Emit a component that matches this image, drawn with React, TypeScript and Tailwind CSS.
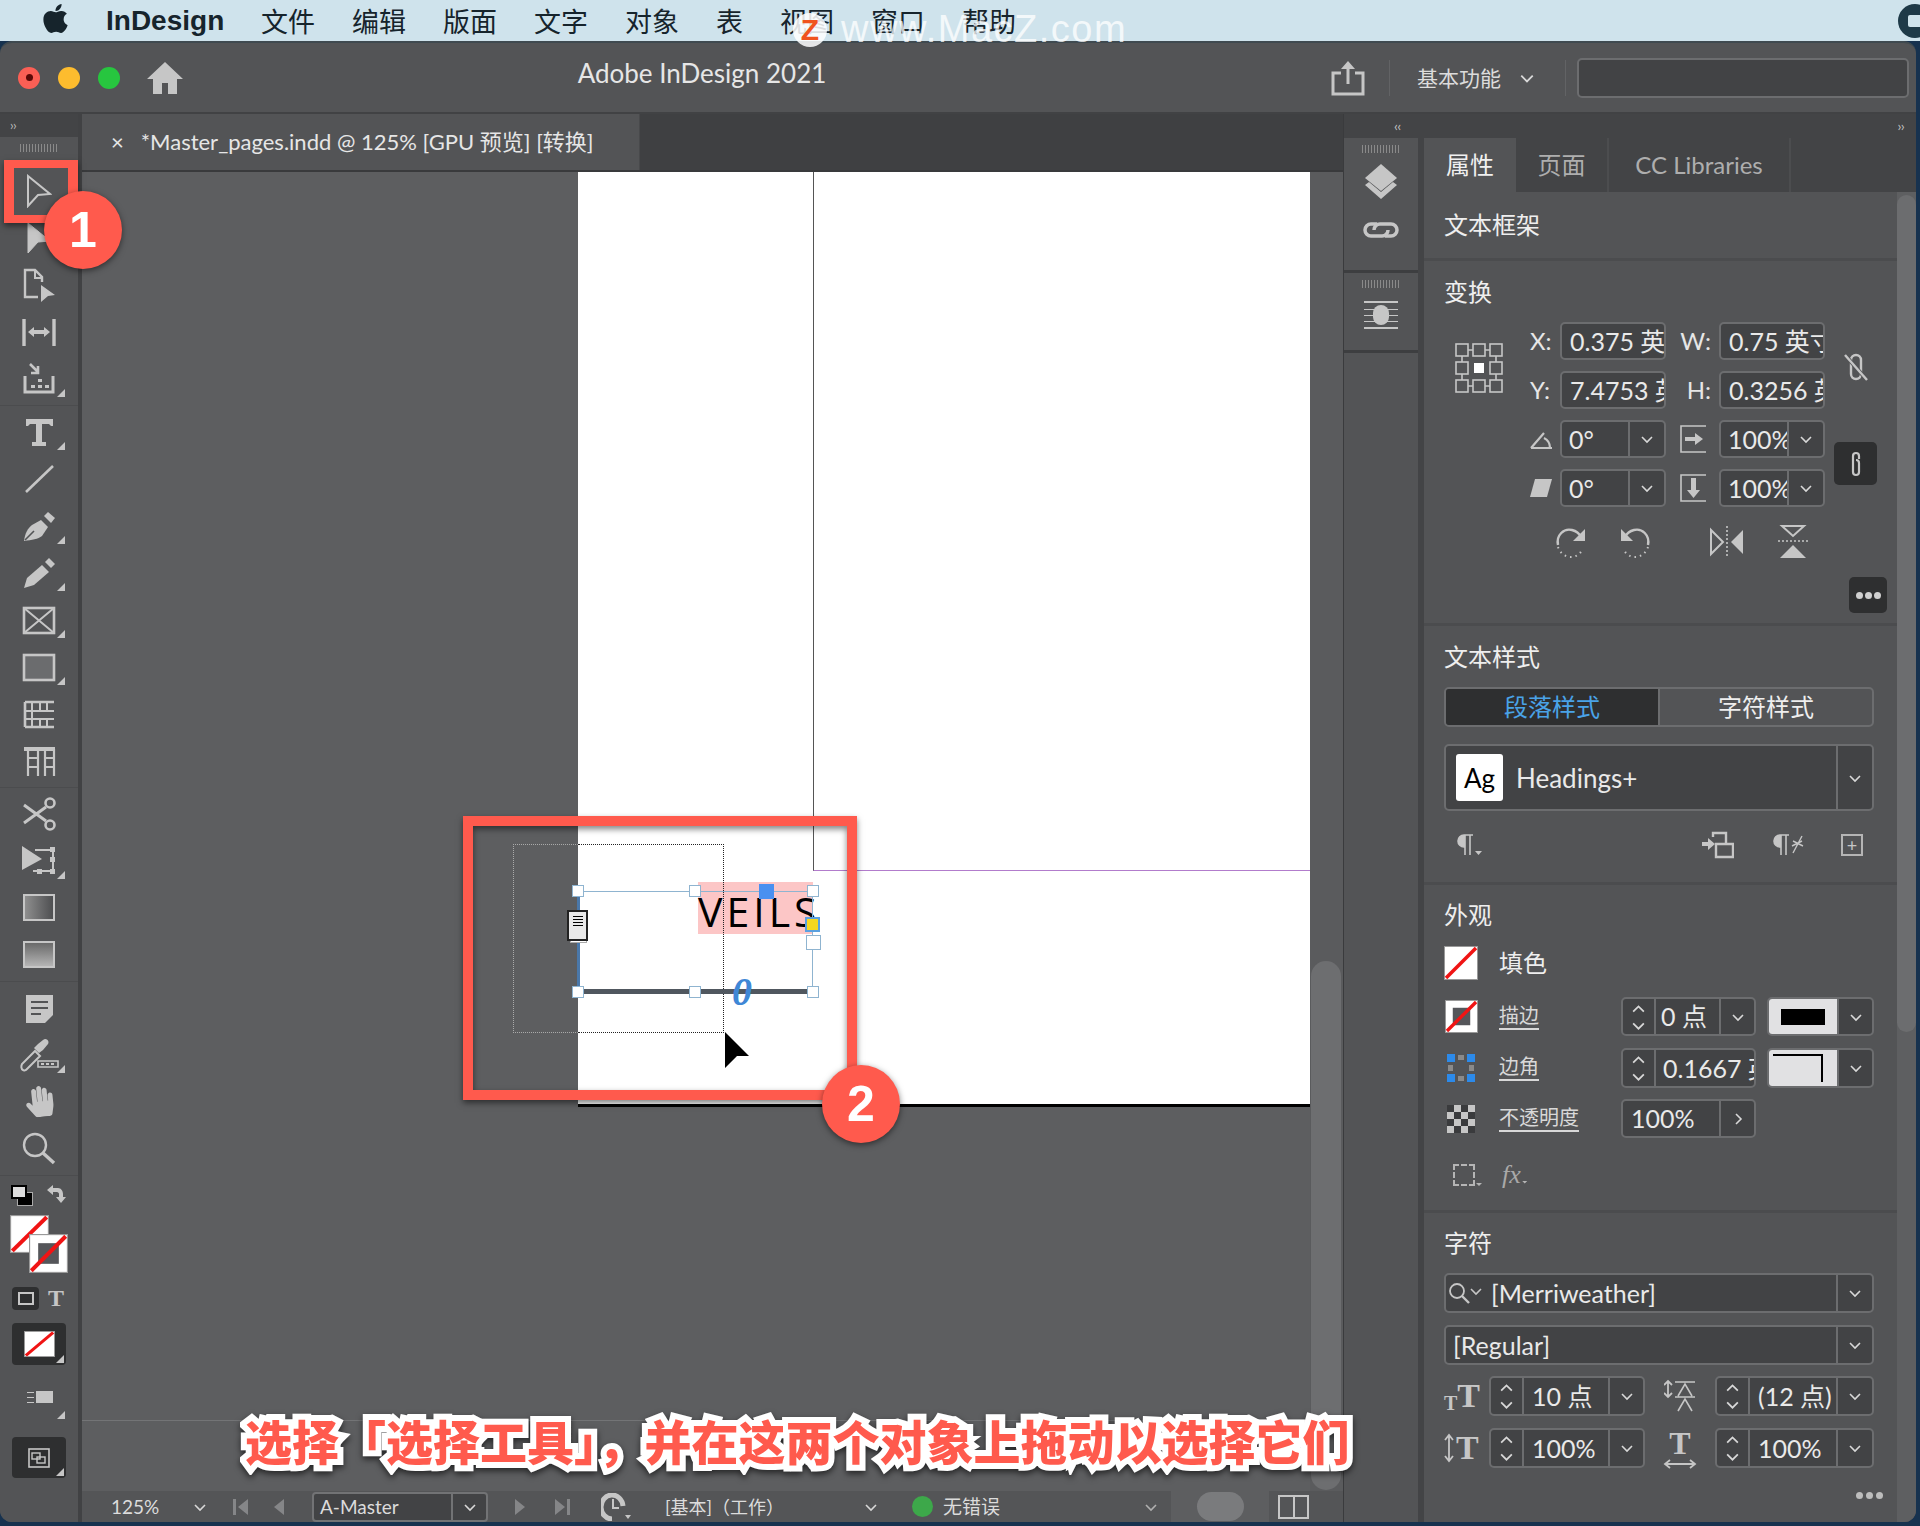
import { ReactNode } from "react";
import { FaApple, FaHandPaper } from "react-icons/fa";

const G = "#c6c6c6";

function Ic({ w = 36, h = 36, vw, vh, className = "", children }: { w?: number; h?: number; vw?: number; vh?: number; className?: string; children: ReactNode }) {
  return (
    <svg width={w} height={h} viewBox={`0 0 ${vw ?? w} ${vh ?? h}`} fill="none" stroke={G} className={`shrink-0 ${className}`}>
      {children}
    </svg>
  );
}

function Chev({ dir = "down", size = 14, color = "#d8d8d8" }: { dir?: "down" | "up" | "right"; size?: number; color?: string }) {
  const d = dir === "down" ? "M2 5l5 5 5-5" : dir === "up" ? "M2 10l5-5 5 5" : "M5 2l5 5-5 5";
  return (
    <svg width={size} height={size} viewBox="0 0 14 14" fill="none" stroke={color} strokeWidth="1.6" className="shrink-0">
      <path d={d} />
    </svg>
  );
}

function Tri() {
  return <div className="absolute left-[57px] bottom-[5px] w-2 h-2 bg-[#c6c6c6] [clip-path:polygon(100%_0,100%_100%,0_100%)]" />;
}

function Tool({ tri, children }: { tri?: boolean; children: ReactNode }) {
  return (
    <div className="relative h-[47px] w-full flex items-center justify-center">
      {children}
      {tri && <Tri />}
    </div>
  );
}

const Sep = () => (
  <div className="h-[6px] flex items-center">
    <div className="h-px w-full bg-[#4b4c4e]" />
  </div>
);

function NoneBox({ w, h, inner }: { w: number; h: number; inner?: boolean }) {
  return (
    <svg width={w} height={h} viewBox="0 0 34 34" preserveAspectRatio="none" className="shrink-0">
      <rect x="0.5" y="0.5" width="33" height="33" fill="#fff" stroke="#999" />
      {inner && <rect x="8" y="8" width="18" height="18" fill="#55565a" />}
      <path d="M2 32L32 2" stroke="#f01414" strokeWidth="3.5" />
    </svg>
  );
}

function LeftTools() {
  return (
    <div className="w-[82px] shrink-0 flex flex-col bg-[#535456] border-r-4 border-[#414244]">
      <div className="h-[23px] bg-[#434446] flex items-center pl-[10px] text-[13px] leading-none text-[#b9b9b9] tracking-tighter">››</div>
      <div className="h-[22px] flex items-center justify-center">
        <div className="w-[38px] h-[8px] bg-[repeating-linear-gradient(90deg,#8a8a8a_0,#8a8a8a_1px,transparent_1px,transparent_3px)]" />
      </div>
      <div className="h-2" />
      <Tool>
        <Ic w={26} h={34}><path d="M2 2l22 18-12 1-10 11z" strokeWidth="2" /></Ic>
      </Tool>
      <Tool>
        <Ic w={26} h={34}><path d="M2 2l22 18-12 1-10 11z" fill={G} strokeWidth="1" /></Ic>
      </Tool>
      <Tool>
        <Ic>
          <path d="M21 15V10l-7-7H4v27h13" strokeWidth="2.4" />
          <path d="M14 3v8h7" strokeWidth="2" />
          <path d="M20 18l14 10-7 1-7 6z" fill={G} stroke="none" />
        </Ic>
      </Tool>
      <Tool>
        <Ic>
          <path d="M3 5v27M33 5v27" strokeWidth="3.4" />
          <path d="M7 18l6-5v3h10v-3l6 5-6 5v-3H13v3z" fill={G} stroke="none" />
        </Ic>
      </Tool>
      <Tool tri>
        <Ic>
          <path d="M4 15v16h28V15" strokeWidth="3" />
          <path d="M9 3l8 8m0-6v7h-7" strokeWidth="2.6" />
          <path d="M10 24h4v3h-4zM17 24h4v3h-4zM24 24h4v3h-4zM17 18h4v3h-4z" fill={G} stroke="none" />
        </Ic>
      </Tool>
      <Sep />
      <Tool tri>
        <Ic><path d="M5 5h27v7h-2l-2-2h-7v18h4v4H11v-4h4V10H9l-2 2H5z" fill={G} stroke="none" /></Ic>
      </Tool>
      <Tool>
        <Ic><path d="M5 31L32 5" strokeWidth="2.6" /></Ic>
      </Tool>
      <Tool tri>
        <Ic>
          <path d="M3 33c1-8 4-13 8-16l9-5 7 7-6 9c-4 3-10 4-18 5z" fill={G} stroke="none" />
          <path d="M4 32l9-9" stroke="#535456" strokeWidth="1.6" />
          <path d="M23 8l4-4 7 6-4 5z" fill={G} stroke="none" />
        </Ic>
      </Tool>
      <Tool tri>
        <Ic>
          <path d="M3 33l3-10 15-13 7 7-15 13z" fill={G} stroke="none" />
          <path d="M24 7l4-4 6 6-4 4z" fill={G} stroke="none" />
        </Ic>
      </Tool>
      <Tool tri>
        <Ic>
          <rect x="3" y="6" width="30" height="25" strokeWidth="2.6" />
          <path d="M3 6l30 25M33 6L3 31" strokeWidth="2" />
        </Ic>
      </Tool>
      <Tool tri>
        <Ic><rect x="3" y="6" width="30" height="25" fill="#6b6c6e" strokeWidth="2.6" /></Ic>
      </Tool>
      <Tool>
        <Ic>
          <path d="M4 6h29M4 31h29M4 6v25" strokeWidth="2.6" />
          <path d="M4 15h29M4 23h29M11 6v25" strokeWidth="2" />
          <path d="M19 6v9M26 6v9M19 23v8M26 23v8" strokeWidth="2" />
        </Ic>
      </Tool>
      <Tool>
        <Ic>
          <path d="M3 6h31" strokeWidth="4" />
          <path d="M7 6v27M17 6v27M24 6v27M33 6v27" strokeWidth="2.2" />
          <path d="M7 15h10M7 24h10M24 15h9M24 24h9" strokeWidth="2" />
        </Ic>
      </Tool>
      <Sep />
      <Tool>
        <Ic>
          <circle cx="29" cy="7" r="4.5" strokeWidth="2.6" />
          <circle cx="29" cy="29" r="4.5" strokeWidth="2.6" />
          <path d="M3 9l22 16M3 27L25 11" strokeWidth="3" />
        </Ic>
      </Tool>
      <Tool tri>
        <Ic>
          <path d="M1 3l20 13-20 11z" fill={G} stroke="none" />
          <path d="M14 7h18v21H12" strokeWidth="2" strokeDasharray="0" />
          <path d="M29 4h5v5h-5zM29 14h5v5h-5zM29 26h5v5h-5zM16 26h5v5h-5z" fill={G} stroke="none" />
        </Ic>
      </Tool>
      <Tool>
        <div className="w-8 h-[27px] border-2 border-[#c6c6c6] bg-gradient-to-r from-[#8f8f8f] to-[#4e4f51]" />
      </Tool>
      <Tool>
        <div className="w-8 h-[27px] border-2 border-[#c6c6c6] bg-gradient-to-b from-[#6a6a6a] to-[#b5b5b5]" />
      </Tool>
      <Sep />
      <Tool>
        <Ic>
          <path d="M5 5h27v20l-8 8H5z" fill={G} stroke="none" />
          <path d="M10 12h17M10 18h17M10 24h10" stroke="#535456" strokeWidth="2" />
        </Ic>
      </Tool>
      <Tool tri>
        <Ic w={40} h={36}>
          <path d="M4 33c-2-1-2-4-1-6l13-13 5 5-13 13c-1 1-3 2-4 1z" strokeWidth="2" />
          <path d="M15 11l5 5 4-3 5-6c2-3-2-7-5-4l-5 4z" fill={G} stroke="none" />
          <path d="M19 24h20v6H19z" strokeWidth="1.6" />
          <path d="M22 26h3v2h-3zM27 26h3v2h-3zM32 26h3v2h-3z" fill={G} stroke="none" />
        </Ic>
      </Tool>
      <Tool>
        <FaHandPaper size={31} color={G} className="-rotate-6" />
      </Tool>
      <Tool>
        <Ic>
          <circle cx="14" cy="14" r="11" strokeWidth="2.4" />
          <path d="M22 22l11 10" strokeWidth="3.4" />
        </Ic>
      </Tool>
      <Sep />
      <div className="flex items-center h-[20px] mt-[7px] pl-[11px] relative">
        <div className="relative w-[24px] h-[20px]">
          <div className="absolute left-[6px] top-[7px] w-[16px] h-[14px] bg-black border border-[#aaa]" />
          <div className="absolute left-0 top-0 w-[16px] h-[14px] bg-[#ddd] border-2 border-black" />
        </div>
        <svg width="22" height="22" viewBox="0 0 22 22" fill={G} className="ml-[11px]">
          <path d="M1 6l6-5v3h5c3 0 5 3 5 6v3h3l-5 6-5-6h3v-3c0-1-1-2-2-2H7v3z" />
        </svg>
      </div>
      <div className="relative h-[57px] mt-[10px]">
        <div className="absolute left-[10px] top-0"><NoneBox w={39} h={38} /></div>
        <div className="absolute left-[29px] top-[19px]"><NoneBox w={39} h={39} inner /></div>
      </div>
      <div className="flex items-center h-[24px] mt-[14px] pl-[12px]">
        <div className="w-[27px] h-[23px] rounded-[4px] bg-[#2e2f30] flex items-center justify-center">
          <div className="w-[16px] h-[13px] border-2 border-[#c6c6c6]" />
        </div>
        <span className="ml-[9px] text-[24px] font-bold leading-none text-[#c6c6c6] [font-family:'Liberation_Serif',serif]">T</span>
      </div>
      <div className="relative h-[42px] mt-[13px] mx-[12px] rounded-[4px] bg-[#2e2f30] flex items-center justify-center">
        <NoneBox w={31} h={26} />
        <div className="absolute right-[2px] bottom-[2px] w-2 h-2 bg-[#c6c6c6] [clip-path:polygon(100%_0,100%_100%,0_100%)]" />
      </div>
      <div className="relative h-[36px] mt-[18px]">
        <div className="absolute left-[36px] top-[8px] w-[17px] h-[12px] bg-[#c6c6c6]" />
        <div className="absolute left-[27px] top-[9px] w-[7px] h-px bg-[#c6c6c6]" />
        <div className="absolute left-[27px] top-[14px] w-[7px] h-px bg-[#c6c6c6]" />
        <div className="absolute left-[27px] top-[19px] w-[7px] h-px bg-[#c6c6c6]" />
        <div className="absolute left-[57px] bottom-0 w-2 h-2 bg-[#c6c6c6] [clip-path:polygon(100%_0,100%_100%,0_100%)]" />
      </div>
      <div className="relative h-[41px] mt-[18px] mx-[12px] rounded-[4px] bg-[#2e2f30] flex items-center justify-center">
        <Ic w={22} h={20}>
          <rect x="1" y="1" width="20" height="18" strokeWidth="1.6" />
          <rect x="4" y="5" width="8" height="6" strokeWidth="1.4" />
          <rect x="9" y="9" width="8" height="6" strokeWidth="1.4" />
        </Ic>
        <div className="absolute right-[2px] bottom-[2px] w-2 h-2 bg-[#c6c6c6] [clip-path:polygon(100%_0,100%_100%,0_100%)]" />
      </div>
    </div>
  );
}

function Canvas() {
  const handles: [number, number, number][] = [
    [496, 719, 12],
    [613, 719, 12],
    [731, 719, 12],
    [731, 770, 15],
    [496, 820, 12],
    [613, 820, 12],
    [731, 820, 12],
  ];
  return (
    <div className="relative flex-1 overflow-hidden bg-[#5d5e60]">
      <div className="absolute left-0 right-0 top-[1248px] h-px bg-[#737476]" />
      <div className="absolute left-[496px] top-0 w-[732px] h-[935px] bg-white border-b-[3px] border-black">
        <div className="absolute left-[235px] top-0 w-[497px] h-[699px] border-l border-b border-l-[#555] border-b-[#b27ccc]" />
        <div className="absolute left-[120px] top-[710px] w-[115px] h-[52px] bg-[#fcc6c6]" />
        <div className="absolute left-[120px] top-[717px] text-[41px] leading-[44px] tracking-[4px] text-black [font-family:'Open_Sans',sans-serif]">VEILS</div>
      </div>
      <div className="absolute left-[431px] top-[672px] w-[211px] h-[189px] border border-dotted border-[#aaa]" />
      <div className="absolute left-[496px] top-[672px] w-[146px] h-[189px] border-t border-r border-b border-dotted border-t-[#222] border-r-[#222] border-b-[#222]" />
      <div className="absolute left-[496px] top-[719px] w-[235px] h-[101px] border border-[#8fb4d0]" />
      <div className="absolute left-[495px] top-[719px] w-[3px] h-[101px] bg-[#4a78aa]" />
      <div className="absolute left-[496px] top-[817px] w-[235px] h-[5px] bg-[#50575f]" />
      {handles.map(([x, y, s]) => (
        <div key={`${x}-${y}`} className="absolute bg-white border border-[#8fb4d0]" style={{ left: x - s / 2, top: y - s / 2, width: s, height: s }} />
      ))}
      <div className="absolute left-[488px] top-[762px] w-[17px] h-[9px] bg-white border border-[#aaa]" />
      <div className="absolute left-[485px] top-[738px] w-[21px] h-[31px] bg-[#e9e9e9] border-2 border-[#222] flex flex-col gap-[2px] items-center pt-[4px]">
        <div className="w-[10px] h-[1px] bg-black" />
        <div className="w-[10px] h-[1px] bg-black" />
        <div className="w-[10px] h-[1px] bg-black" />
        <div className="w-[10px] h-[1px] bg-black" />
      </div>
      <div className="absolute left-[677px] top-[712px] w-[15px] h-[15px] bg-[#4a90f0]" />
      <div className="absolute left-[723px] top-[745px] w-[15px] h-[15px] bg-[#f5d821] border-2 border-[#5aa0e0]" />
      <div className="absolute left-[650px] top-[800px] text-[40px] leading-[40px] italic font-bold text-[#3f87d6] [font-family:'Liberation_Serif',serif]">0</div>
      <svg width="26" height="36" viewBox="0 0 26 36" className="absolute left-[642px] top-[860px]">
        <path d="M1 0l24 24-12 0-12 12z" fill="#000" />
      </svg>
    </div>
  );
}

function StatusBar() {
  return (
    <div className="h-[31px] shrink-0 bg-[#545557] flex items-center text-[19px] text-[#dcdcdc] leading-none">
      <span className="ml-[29px] w-[49px]">125%</span>
      <div className="ml-[33px]"><Chev /></div>
      <svg width="18" height="20" viewBox="0 0 18 20" fill="#858688" className="ml-[25px]"><path d="M1 2h3v16H1zM16 2v16L6 10z" /></svg>
      <svg width="10" height="20" viewBox="0 0 10 20" fill="#858688" className="ml-[24px]"><path d="M10 2v16L0 10z" /></svg>
      <div className="ml-[28px] w-[176px] h-[30px] rounded-[4px] border-2 border-[#727375] bg-[#424345] flex items-center">
        <span className="pl-[6px] flex-1">A-Master</span>
        <div className="w-[35px] h-full border-l-2 border-[#727375] flex items-center justify-center"><Chev /></div>
      </div>
      <svg width="10" height="20" viewBox="0 0 10 20" fill="#858688" className="ml-[27px]"><path d="M0 2v16l10-8z" /></svg>
      <svg width="18" height="20" viewBox="0 0 18 20" fill="#858688" className="ml-[28px]"><path d="M14 2h3v16h-3zM2 2v16l10-8z" /></svg>
      <svg width="30" height="28" viewBox="0 0 30 28" fill="none" className="ml-[30px]">
        <path d="M11 26A11 12 0 1 1 22 13" stroke="#c6c6c6" strokeWidth="5" />
        <path d="M12 6v9h6" stroke="#c6c6c6" strokeWidth="2" />
        <path d="M24 22h6l-3 4z" fill="#c6c6c6" />
      </svg>
      <span className="ml-[34px] w-[126px] whitespace-nowrap text-[18px]">[基本]（工作）</span>
      <div className="ml-[73px]"><Chev /></div>
      <div className="ml-[34px] w-[21px] h-[21px] rounded-full bg-[#3da84a]" />
      <span className="ml-[10px] w-[58px] whitespace-nowrap text-[19px]">无错误</span>
      <div className="ml-[143px]"><Chev color="#b0b0b0" /></div>
      <div className="ml-[13px] w-[98px] h-full bg-[#5d5e60] flex items-center justify-center">
        <div className="w-[47px] h-[29px] rounded-full bg-[#7a7b7d]" />
      </div>
      <div className="ml-[9px] w-[31px] h-[24px] border-2 border-[#c6c6c6] flex justify-center">
        <div className="w-[2px] h-full bg-[#c6c6c6]" />
      </div>
    </div>
  );
}

function Title({ children }: { children: ReactNode }) {
  return <div className="h-[30px] leading-[30px] text-[24px] text-[#eeeeee]">{children}</div>;
}

function Box({ w, h = 38, className = "", children }: { w?: number | string; h?: number; className?: string; children: ReactNode }) {
  return (
    <div className={`flex items-stretch shrink-0 overflow-hidden rounded-[5px] border-2 border-[#6c6d6f] bg-[#424345] text-[#e9e9e9] text-[25px] leading-none ${className}`} style={{ width: w, height: h }}>
      {children}
    </div>
  );
}

function Txt({ pl = 8, children }: { pl?: number; children: ReactNode }) {
  return <div className="flex-1 min-w-0 flex items-center whitespace-nowrap overflow-hidden" style={{ paddingLeft: pl }}>{children}</div>;
}

function ChevCell({ w = 35, dir = "down" }: { w?: number; dir?: "down" | "right" }) {
  return (
    <div className="shrink-0 border-l-2 border-[#6c6d6f] flex items-center justify-center" style={{ width: w }}>
      <Chev dir={dir} />
    </div>
  );
}

function Stepper() {
  return (
    <div className="w-[33px] shrink-0 border-r-2 border-[#6c6d6f] flex flex-col items-center justify-center gap-[2px]">
      <Chev dir="up" size={15} />
      <Chev size={15} />
    </div>
  );
}

function Combo({ value, w = 106 }: { value: string; w?: number }) {
  return (
    <Box w={w}>
      <Txt pl={7}>{value}</Txt>
      <ChevCell w={36} />
    </Box>
  );
}

function Label({ children }: { children: ReactNode }) {
  return <span className="text-[20px] text-[#d8d8d8] underline underline-offset-[5px] decoration-[1.5px] leading-none">{children}</span>;
}

function Transform() {
  const boxes = [2, 19, 36];
  return (
    <div className="pt-4 pb-[10px] pl-5 border-b-[3px] border-[#4b4c4e]">
      <Title>变换</Title>
      <div className="flex mt-[15px] relative">
        <div className="w-[86px] shrink-0 pl-[10px] pt-[20px]">
          <svg width="50" height="52" viewBox="0 0 50 52" fill="none" stroke={G} strokeWidth="1.6">
            {boxes.flatMap((x) =>
              [2, 20, 38].map((y) =>
                x === 19 && y === 20 ? (
                  <rect key={`${x}${y}`} x={x + 1} y={y + 1} width="10" height="10" fill="#fff" stroke="none" />
                ) : (
                  <rect key={`${x}${y}`} x={x} y={y} width="12" height="12" />
                ),
              ),
            )}
            <path d="M14 8h5M31 8h5M14 44h5M31 44h5M8 14v6M8 32v6M42 14v6M42 32v6" />
          </svg>
        </div>
        <div className="flex flex-col gap-[11px]">
          <div className="flex items-center">
            <span className="w-[30px] text-[24px] text-[#e6e6e6]">X:</span>
            <Box w={106}><Txt>0.375 英寸</Txt></Box>
            <span className="w-[53px] pr-2 text-right text-[24px] text-[#e6e6e6]">W:</span>
            <Box w={106}><Txt>0.75 英寸</Txt></Box>
          </div>
          <div className="flex items-center">
            <span className="w-[30px] text-[24px] text-[#e6e6e6]">Y:</span>
            <Box w={106}><Txt>7.4753 英寸</Txt></Box>
            <span className="w-[53px] pr-2 text-right text-[24px] text-[#e6e6e6]">H:</span>
            <Box w={106}><Txt>0.3256 英寸</Txt></Box>
          </div>
          <div className="flex items-center">
            <div className="w-[30px]">
              <Ic w={23} h={22}><path d="M1 20h21M1 20L14 5M14 10c4 2 6 6 6 10" strokeWidth="2.2" /></Ic>
            </div>
            <Combo value="0°" />
            <div className="w-[53px] flex justify-center">
              <Ic w={28} h={30}>
                <path d="M27 2H2v26h25" strokeWidth="1.6" strokeDasharray="0" />
                <path d="M6 13h10V9l8 6-8 6v-4H6z" fill={G} stroke="none" />
              </Ic>
            </div>
            <Combo value="100%" />
          </div>
          <div className="flex items-center">
            <div className="w-[30px]">
              <Ic w={23} h={20}><path d="M5 1h17l-5 18H0z" fill={G} stroke="none" /></Ic>
            </div>
            <Combo value="0°" />
            <div className="w-[53px] flex justify-center">
              <Ic w={28} h={30}>
                <path d="M27 2H2v26h25" strokeWidth="1.6" />
                <path d="M12 5h5v12h4l-6.500 8-6.500-8h4z" fill={G} stroke="none" />
              </Ic>
            </div>
            <Combo value="100%" />
          </div>
        </div>
        <div className="ml-[9px] flex flex-col items-center w-[43px]">
          <div className="mt-[30px]">
            <Ic w={26} h={30}>
              <rect x="8" y="3" width="10" height="24" rx="5" strokeWidth="2.4" />
              <path d="M2 3l22 25" stroke="#535456" strokeWidth="4" />
              <path d="M2 3l22 25" strokeWidth="2.4" />
            </Ic>
          </div>
          <div className="mt-[60px] w-[43px] h-[43px] rounded-[5px] bg-[#2e2f30] flex items-center justify-center">
            <Ic w={14} h={28}>
              <path d="M10 9V6a3 3 0 0 0-6 0v16a3 3 0 0 0 6 0v-9a3 3 0 0 0-3-3" strokeWidth="2.2" />
            </Ic>
          </div>
        </div>
      </div>
      <div className="flex h-[34px] mt-[18px] items-center">
        <div className="ml-[110px]">
          <Ic w={32} h={34}>
            <path d="M4 20C2 10 10 3 18 5c4 1 7 3 9 7" strokeWidth="2.4" />
            <path d="M31 4v12H19z" fill={G} stroke="none" />
            <path d="M4 22c2 6 7 10 13 10 5 0 9-3 11-7" strokeWidth="2" strokeDasharray="1.500 4" />
          </Ic>
        </div>
        <div className="ml-[34px] -scale-x-100">
          <Ic w={32} h={34}>
            <path d="M4 20C2 10 10 3 18 5c4 1 7 3 9 7" strokeWidth="2.4" />
            <path d="M31 4v12H19z" fill={G} stroke="none" />
            <path d="M4 22c2 6 7 10 13 10 5 0 9-3 11-7" strokeWidth="2" strokeDasharray="1.500 4" />
          </Ic>
        </div>
        <div className="ml-[58px]">
          <Ic w={34} h={34}>
            <path d="M1 5v24l12-12z" strokeWidth="2" />
            <path d="M33 5v24L21 17z" fill={G} stroke="none" />
            <path d="M17 1v32" strokeWidth="1.6" strokeDasharray="2 2" />
          </Ic>
        </div>
        <div className="ml-[34px]">
          <Ic w={30} h={36}>
            <path d="M4 2h22L15 12z" strokeWidth="2" />
            <path d="M2 34h26L15 21z" fill={G} stroke="none" />
            <path d="M0 17h30" strokeWidth="1.6" strokeDasharray="2 2" />
          </Ic>
        </div>
      </div>
      <div className="flex justify-end mt-[18px] pr-[10px]">
        <div className="w-[38px] h-[36px] rounded-[5px] bg-[#2e2f30] flex items-center justify-center gap-[2px]">
          <div className="w-[7px] h-[7px] rounded-full bg-[#cfcfcf]" />
          <div className="w-[7px] h-[7px] rounded-full bg-[#cfcfcf]" />
          <div className="w-[7px] h-[7px] rounded-full bg-[#cfcfcf]" />
        </div>
      </div>
    </div>
  );
}

function TextStyles() {
  return (
    <div className="pt-4 pb-[22px] pl-5 pr-[23px] border-b-[3px] border-[#4b4c4e]">
      <Title>文本样式</Title>
      <div className="mt-[15px] h-[40px] flex rounded-[5px] border-2 border-[#6c6d6f] overflow-hidden text-[24px] leading-none">
        <div className="w-[212px] bg-[#2e2f30] text-[#4aa3e8] flex items-center justify-center">段落样式</div>
        <div className="flex-1 border-l-2 border-[#6c6d6f] text-[#eeeeee] flex items-center justify-center">字符样式</div>
      </div>
      <Box h={67} className="mt-[17px] w-full">
        <div className="flex-1 flex items-center pl-[10px]">
          <div className="w-[47px] h-[47px] rounded-[3px] bg-white text-black text-[26px] flex items-center justify-center">Ag</div>
          <span className="ml-[13px] text-[26px]">Headings+</span>
        </div>
        <ChevCell w={36} />
      </Box>
      <div className="mt-[19px] h-[30px] flex items-center text-[#c6c6c6]">
        <div className="ml-[13px] flex items-end w-[30px]">
          <Ic w={18} h={24}><path d="M8 2H7a6 6 0 0 0 0 12h1zM8 2h8M8 2v20M13 2v20" fill={G} strokeWidth="1.600" /></Ic>
          <div className="w-[7px] h-[4px] bg-[#c6c6c6] [clip-path:polygon(0_0,100%_0,50%_100%)] mb-[2px]" />
        </div>
        <div className="ml-[215px]">
          <Ic w={32} h={28}>
            <path d="M11 6V2h13v11h7v13H14V13h10" strokeWidth="2.400" />
            <path d="M0 11h6V7l7 6-7 6v-4H0z" fill={G} stroke="none" />
          </Ic>
        </div>
        <div className="ml-[39px] flex">
          <Ic w={18} h={24}><path d="M8 2H7a6 6 0 0 0 0 12h1zM8 2h8M8 2v20M13 2v20" fill={G} strokeWidth="1.600" /></Ic>
          <Ic w={13} h={24}><path d="M11 3L2 20M2 8l10 5M1 13l10-5" strokeWidth="1.400" /></Ic>
        </div>
        <div className="ml-[37px] w-[22px] h-[22px] border-2 border-[#b5b5b5] flex items-center justify-center text-[18px] leading-none">+</div>
      </div>
    </div>
  );
}

function Appearance() {
  return (
    <div className="pt-[15px] pb-5 pl-5 pr-[23px] border-b-[3px] border-[#4b4c4e]">
      <Title>外观</Title>
      <div className="mt-4 h-[34px] flex items-center">
        <NoneBox w={34} h={34} />
        <span className="ml-[21px] text-[24px] text-[#eeeeee] leading-none">填色</span>
      </div>
      <div className="mt-[17px] h-[39px] flex items-center">
        <div className="w-[55px] pl-px"><NoneBox w={33} h={33} inner /></div>
        <div className="w-[122px]"><Label>描边</Label></div>
        <Box w={135} h={39}>
          <Stepper />
          <Txt pl={5}>0 点</Txt>
          <ChevCell />
        </Box>
        <Box w={107} h={39} className="ml-[11px]">
          <div className="flex-1 bg-[#e1e1e3] flex items-center justify-center">
            <div className="w-[44px] h-[16px] bg-black" />
          </div>
          <ChevCell w={35} />
        </Box>
      </div>
      <div className="mt-3 h-[40px] flex items-center">
        <div className="w-[55px] pl-[3px]">
          <svg width="28" height="28" viewBox="0 0 28 28">
            <path d="M0 0h8v8H0zM20 0h8v8h-8zM0 20h8v8H0zM20 20h8v8h-8z" fill="#2c8aea" />
            <path d="M11 1h6v5h-6zM11 22h6v5h-6zM1 11h5v6H1zM22 11h5v6h-5z" fill="#8a8a8a" />
          </svg>
        </div>
        <div className="w-[122px]"><Label>边角</Label></div>
        <Box w={135} h={40}>
          <Stepper />
          <Txt pl={7}>0.1667 英寸</Txt>
        </Box>
        <Box w={107} h={40} className="ml-[11px]">
          <div className="flex-1 bg-[#e1e1e3] relative">
            <div className="absolute left-[4px] top-[4px] right-[14px] bottom-[4px] border-t-2 border-r-2 border-black" />
          </div>
          <ChevCell w={35} />
        </Box>
      </div>
      <div className="mt-[11px] h-[39px] flex items-center">
        <div className="w-[55px] pl-[3px]">
          <div className="w-[28px] h-[28px] bg-[conic-gradient(#c6c6c6_25%,#3a3b3d_0_50%,#c6c6c6_0_75%,#3a3b3d_0)] bg-[length:14px_14px]" />
        </div>
        <div className="w-[122px]"><Label>不透明度</Label></div>
        <Box w={135} h={39}>
          <Txt pl={8}>100%</Txt>
          <ChevCell dir="right" />
        </Box>
      </div>
      <div className="mt-[22px] h-[30px] flex items-center">
        <div className="ml-[9px] flex items-end">
          <div className="w-[22px] h-[22px] border-2 border-dashed border-[#b5b5b5]" />
          <div className="ml-[1px] w-[6px] h-[3px] bg-[#b5b5b5] [clip-path:polygon(0_0,100%_0,50%_100%)]" />
        </div>
        <span className="ml-[20px] text-[26px] italic text-[#a9a9a9] leading-none [font-family:'Liberation_Serif',serif]">fx</span>
        <div className="mt-[14px] ml-[1px] w-[6px] h-[3px] bg-[#b5b5b5] [clip-path:polygon(0_0,100%_0,50%_100%)]" />
      </div>
    </div>
  );
}

const SerifT = ({ size, className = "" }: { size: number; className?: string }) => (
  <span className={`font-bold leading-none text-[#c6c6c6] [font-family:'Liberation_Serif',serif] ${className}`} style={{ fontSize: size }}>T</span>
);

function CharPanel() {
  return (
    <div className="pt-[15px] pl-5 pr-[23px]">
      <Title>字符</Title>
      <Box h={40} className="mt-[15px] w-full">
        <div className="flex-1 flex items-center">
          <svg width="36" height="26" viewBox="0 0 36 26" fill="none" stroke={G} className="ml-px">
            <circle cx="10" cy="11" r="7" strokeWidth="1.8" />
            <path d="M15 16l7 7" strokeWidth="2.400" />
            <path d="M24 9l5 5 5-5" strokeWidth="1.600" />
          </svg>
          <span className="ml-[8px]">[Merriweather]</span>
        </div>
        <ChevCell w={36} />
      </Box>
      <Box h={40} className="mt-3 w-full">
        <Txt pl={7}>[Regular]</Txt>
        <ChevCell w={36} />
      </Box>
      <div className="mt-[11px] flex items-center">
        <div className="w-[45px] flex items-end"><SerifT size={20} /><SerifT size={34} /></div>
        <Box w={156} h={40}>
          <Stepper />
          <Txt pl={8}>10 点</Txt>
          <ChevCell />
        </Box>
        <div className="w-[70px] flex justify-center">
          <Ic w={32} h={34}>
            <path d="M4 2v16M0 6l4-4 4 4M0 14l4 4 4-4" strokeWidth="1.800" />
            <path d="M11 3h20M14 17l7-12 7 12M14 32l7-12 7 12M11 18h20" strokeWidth="1.600" />
          </Ic>
        </div>
        <Box w={159} h={40}>
          <Stepper />
          <Txt pl={8}>(12 点)</Txt>
          <ChevCell w={36} />
        </Box>
      </div>
      <div className="mt-[11px] flex items-center">
        <div className="w-[45px] flex items-center">
          <Ic w={10} h={30}><path d="M5 2v26M1 7l4-5 4 5M1 23l4 5 4-5" strokeWidth="1.800" /></Ic>
          <SerifT size={34} className="ml-[2px]" />
        </div>
        <Box w={156} h={40}>
          <Stepper />
          <Txt pl={8}>100%</Txt>
          <ChevCell />
        </Box>
        <div className="w-[70px] flex flex-col items-center">
          <SerifT size={32} />
          <Ic w={34} h={10}><path d="M2 5h30M7 1L2 5l5 4M27 1l5 4-5 4" strokeWidth="1.800" /></Ic>
        </div>
        <Box w={159} h={40}>
          <Stepper />
          <Txt pl={8}>100%</Txt>
          <ChevCell w={36} />
        </Box>
      </div>
      <div className="mt-[23px] flex justify-end gap-[3px] pr-[-8px] translate-x-[9px]">
        <div className="w-[7px] h-[7px] rounded-full bg-[#bdbdbd]" />
        <div className="w-[7px] h-[7px] rounded-full bg-[#bdbdbd]" />
        <div className="w-[7px] h-[7px] rounded-full bg-[#bdbdbd]" />
      </div>
    </div>
  );
}

function RightPanels() {
  return (
    <div className="w-[573px] shrink-0 flex flex-col border-l border-[#3a3b3d] bg-[#434446]">
      <div className="h-[24px] shrink-0 bg-[#434446] relative flex items-center text-[14px] leading-none text-[#c0c0c0]">
        <span className="ml-[50px] tracking-tighter">‹‹</span>
        <span className="ml-auto mr-3 tracking-tighter">››</span>
      </div>
      <div className="flex flex-1 min-h-0">
        <div className="w-[74px] shrink-0 bg-[#535456] border-r-[6px] border-[#434446] box-content flex flex-col">
          <div className="h-[135px] border-b-[3px] border-[#3d3e40] flex flex-col items-center pt-[7px]">
            <div className="w-[38px] h-[8px] bg-[repeating-linear-gradient(90deg,#8a8a8a_0,#8a8a8a_1px,transparent_1px,transparent_3px)]" />
            <svg width="34" height="36" viewBox="0 0 34 36" fill={G} className="mt-[11px]">
              <path d="M17 0l16 14-16 13L1 14z" />
              <path d="M1 21l4-3 12 10 12-10 4 3-16 14z" />
            </svg>
            <svg width="38" height="22" viewBox="0 0 38 22" fill="none" stroke={G} strokeWidth="3.500" className="mt-[19px]">
              <path d="M15 5H9a6 6 0 0 0 0 12h11a6 6 0 0 0 6-6" />
              <path d="M23 17h6a6 6 0 0 0 0-12H18a6 6 0 0 0-6 6" />
            </svg>
          </div>
          <div className="h-[80px] border-b-[3px] border-[#3d3e40] flex flex-col items-center pt-[7px]">
            <div className="w-[38px] h-[8px] bg-[repeating-linear-gradient(90deg,#8a8a8a_0,#8a8a8a_1px,transparent_1px,transparent_3px)]" />
            <div className="relative mt-[13px] w-[34px] h-[28px]">
              <div className="absolute inset-x-0 top-0 h-[2px] bg-[#c6c6c6]" />
              <div className="absolute inset-x-0 bottom-0 h-[2px] bg-[#c6c6c6]" />
              <div className="absolute inset-x-0 top-[8px] h-px bg-[#c6c6c6]" />
              <div className="absolute inset-x-0 top-[14px] h-px bg-[#c6c6c6]" />
              <div className="absolute inset-x-0 top-[20px] h-px bg-[#c6c6c6]" />
              <div className="absolute left-[9px] top-[4px] w-[16px] h-[20px] rounded-full bg-[#c6c6c6]" />
            </div>
          </div>
        </div>
        <div className="flex-1 min-w-0 flex flex-col">
          <div className="h-[54px] shrink-0 flex bg-[#434446] text-[24px] leading-none">
            <div className="w-[92px] bg-[#535456] text-[#f0f0f0] flex items-center justify-center">属性</div>
            <div className="w-[93px] border-r-2 border-[#4c4d4f] text-[#aeaeae] flex items-center justify-center">页面</div>
            <div className="w-[182px] border-r-2 border-[#4c4d4f] text-[#aeaeae] flex items-center justify-center">CC Libraries</div>
          </div>
          <div className="flex-1 min-h-0 flex bg-[#535456]">
            <div className="w-[473px] shrink-0">
              <div className="h-[66px] pl-5 flex items-center border-b-[3px] border-[#4b4c4e] box-content">
                <Title>文本框架</Title>
              </div>
              <Transform />
              <TextStyles />
              <Appearance />
              <CharPanel />
            </div>
            <div className="flex-1 bg-[#5e5f61] pt-[3px]">
              <div className="h-[837px] rounded-full bg-[#6c6d6f]" />
            </div>
          </div>
        </div>
      </div>
    </div>
  );
}

export default function App() {
  return (
    <div className="relative w-[1920px] h-[1526px] overflow-hidden bg-[#17324f] [font-family:Lato,'Noto_Sans_CJK_SC',sans-serif]">
      <div className="h-[41px] bg-[#cfe3ec] flex items-center text-[#16242c] text-[27px] leading-none [font-family:'Noto_Sans_CJK_SC',sans-serif] overflow-hidden">
        <FaApple size={33} className="ml-[39px] -mt-1" />
        <span className="ml-[34px] w-[118px] text-[28px] font-bold [font-family:'Liberation_Sans',sans-serif]">InDesign</span>
        <div className="ml-[37px] flex gap-[37px]">
          {["文件", "编辑", "版面", "文字", "对象", "表", "视图", "窗口", "帮助"].map((m) => (
            <span key={m}>{m}</span>
          ))}
        </div>
        <div className="ml-auto -mr-3 w-[34px] h-[34px] rounded-full bg-[#1e3a48] flex items-center justify-center">
          <div className="w-[14px] h-[12px] rounded-[2px] bg-[#cfe3ec]" />
        </div>
      </div>

      <div className="w-[1916px] h-[1481px] rounded-xl overflow-hidden bg-[#535456] flex flex-col border-t-2 border-[#3f4a50]">
        <div className="h-[71px] shrink-0 relative flex items-center border-b-2 border-[#414244]">
          <div className="ml-[18px] w-[22px] h-[22px] rounded-full bg-[#fb5f55] flex items-center justify-center">
            <div className="w-[7px] h-[7px] rounded-full bg-[#5b0a08]" />
          </div>
          <div className="ml-[18px] w-[22px] h-[22px] rounded-full bg-[#fdbc2e]" />
          <div className="ml-[18px] w-[22px] h-[22px] rounded-full bg-[#27c63f]" />
          <svg width="36" height="32" viewBox="0 0 36 32" fill={G} className="ml-[27px]">
            <path d="M18 0L0 17h6v15h9V21h6v11h9V17h6z" />
          </svg>
          <div className="absolute left-[572px] top-[14px] w-[260px] text-center text-[26px] leading-[32px] text-[#e6e6e6] whitespace-nowrap">Adobe InDesign 2021</div>
          <svg width="34" height="36" viewBox="0 0 34 36" fill="none" stroke={G} strokeWidth="3" className="ml-auto">
            <path d="M10 13H2v21h30V13h-8" />
            <path d="M17 24V5" />
            <path d="M10 9l7-8 7 8z" fill={G} stroke="none" />
          </svg>
          <div className="ml-[24px] w-px h-[36px] bg-[#626365]" />
          <span className="ml-[27px] text-[21px] text-[#dcdcdc] leading-none whitespace-nowrap">基本功能</span>
          <div className="ml-[18px]"><Chev size={16} /></div>
          <div className="ml-[30px] w-px h-[36px] bg-[#626365]" />
          <div className="ml-[11px] mr-[7px] w-[332px] h-[40px] rounded-[5px] border-2 border-[#6c6d6f] bg-[#424345]" />
        </div>

        <div className="flex flex-1 min-h-0">
          <LeftTools />
          <div className="flex-1 min-w-0 flex flex-col">
            <div className="h-[58px] shrink-0 bg-[#3f4042] flex items-end border-b-2 border-[#393a3c]">
              <div className="w-[558px] h-[56px] bg-[#535456] flex items-center text-[#e6e6e6] border-r border-[#48494b]">
                <span className="ml-[29px] text-[22px] leading-none">×</span>
                <span className="ml-[17px] text-[22px] leading-none whitespace-nowrap">*Master_pages.indd @ 125% [GPU 预览] [转换]</span>
              </div>
            </div>
            <div className="flex flex-1 min-h-0">
              <Canvas />
              <div className="w-[33px] shrink-0 bg-[#5a5b5d] pt-[789px] pl-px">
                <div className="h-[529px] w-[30px] rounded-full bg-[#6d6e70]" />
              </div>
            </div>
            <StatusBar />
          </div>
          <RightPanels />
        </div>
      </div>

      <div className="absolute left-[4px] top-[160px] w-[74px] h-[63px] border-x-[10px] border-y-[8px] border-[#ff5a4d] shadow-[0_3px_6px_rgba(0,0,0,0.5)]" />
      <div className="absolute left-[44px] top-[191px] w-[78px] h-[78px] rounded-full bg-[#ff5a4d] text-white text-[50px] font-bold flex items-center justify-center shadow-[0_2px_6px_rgba(0,0,0,0.5)] [font-family:'Liberation_Sans',sans-serif]">1</div>

      <div className="absolute left-[463px] top-[816px] w-[394px] h-[284px] border-[10px] border-[#ff5a4d] shadow-[0_3px_6px_rgba(0,0,0,0.5),inset_0_3px_6px_rgba(0,0,0,0.5)]" />
      <div className="absolute left-[822px] top-[1065px] w-[78px] h-[78px] rounded-full bg-[#ff5a4d] text-white text-[50px] font-bold flex items-center justify-center shadow-[0_2px_6px_rgba(0,0,0,0.5)] [font-family:'Liberation_Sans',sans-serif]">2</div>

      <div className="absolute left-[245px] top-[1410px] w-[1150px] whitespace-nowrap text-[47px] leading-[60px] font-black text-[#ff5a4d] [-webkit-text-stroke:12px_white] [paint-order:stroke_fill] drop-shadow-[0_3px_3px_rgba(0,0,0,0.6)] [font-family:'Noto_Sans_CJK_SC',sans-serif]">
        选择「选择工具」，并在这两个对象上拖动以选择它们
      </div>

      <div className="absolute left-[793px] top-[13px] w-[34px] h-[34px] rounded-full bg-white/85 text-[#f0541e] text-[30px] font-black leading-none flex items-center justify-center [font-family:'Liberation_Sans',sans-serif]">Z</div>
      <div className="absolute left-[841px] top-[7px] text-[38px] leading-[44px] tracking-[1.5px] text-white/75 whitespace-nowrap [font-family:'Liberation_Sans',sans-serif]">www.MacZ.com</div>
    </div>
  );
}
